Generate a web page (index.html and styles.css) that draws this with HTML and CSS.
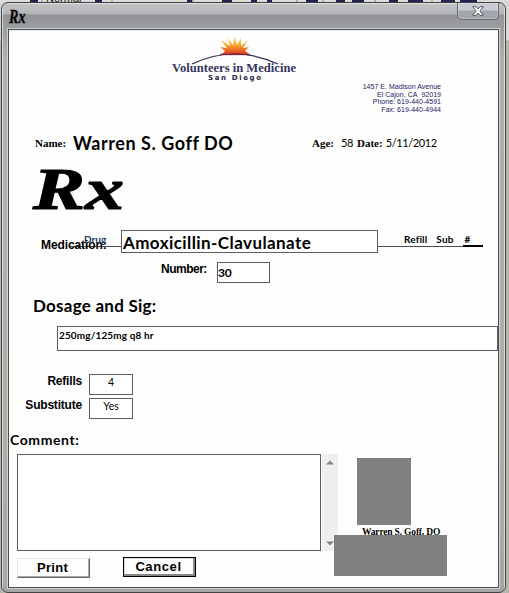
FILE: index.html
```
<!DOCTYPE html>
<html lang="en">
<head>
<meta charset="utf-8">
<title>Rx</title>
<link rel="stylesheet" href="styles.css">
</head>
<body>
<svg class="behind" width="509" height="5" viewBox="0 0 509 5" aria-hidden="true">
  <path d="M0 0H509V2H0Z" fill="#dcdcda"/>
  <path d="M30 1h8M95 1h7M187 1h5M222 1h10M251 1h6M267 1h5M306 1h12M336 1h9M352 1h12M389 1h9M408 1h15M441 1h14M460 1h17" stroke="#24244f" stroke-width="2"/>
  <path d="M42 0v2M112 0v2M193 0v2M297 0v2M323 0v2M375 0v2M432 0v2" stroke="#888"/>
  <text x="46" y="2" class="behind-text">Normal</text>
</svg>
<div class="window">
  <header class="titlebar">
    <span class="title">Rx</span>
    <button class="close" aria-label="Close"><svg width="12" height="10" viewBox="0 0 12 10"><path d="M.7.7H4L6 3 8 .7h3.3L7.8 5l3.5 4.3H8L6 7 4 9.3H.7L4.2 5Z" fill="#fff" stroke="#555a66"/></svg></button>
  </header>
  <main class="form">
    <section class="letterhead">
      <svg class="logo" width="140" height="54" viewBox="165 32 140 54">
        <defs><linearGradient id="sun" x1="0" y1="0" x2="0" y2="1"><stop offset="0" stop-color="#ffe36a"/><stop offset=".5" stop-color="#f8a72c"/><stop offset="1" stop-color="#de3b20"/></linearGradient></defs>
        <path d="M222 54 225 51 220 47 227 48 221 40 230 46 228 38 233 45 234.500 36 237 45 241 38 241 46 248 40 243 48 249 47 245 51 249 54Z" fill="url(#sun)"/>
        <path d="M192 64Q234 44 278 64" fill="none" stroke="#26264e" stroke-width="1.2"/>
        <path d="M220 54.500h30" stroke="#722742" stroke-width="1.300"/>
        <text x="172" y="72" textLength="124" lengthAdjust="spacingAndGlyphs" class="logo-name">Volunteers in Medicine</text>
        <text x="208" y="80" textLength="53" class="logo-city">San Diego</text>
      </svg>
      <address class="address">1457 E. Madison Avenue<br>El Cajon, CA&nbsp; 92019<br>Phone: 619-440-4591<br>Fax: 619-440-4944</address>
    </section>
    <section class="patient">
      <b class="serif name-label">Name:</b><b class="name">Warren S. Goff DO</b>
      <b class="serif age-label">Age:</b><span class="age">58</span><b class="serif">Date:</b><span class="date">5/11/2012</span>
    </section>
    <svg class="rx" width="100" height="50" viewBox="0 0 100 50"><text x="4" y="43.500" textLength="91" lengthAdjust="spacingAndGlyphs">Rx</text></svg>
    <section class="medication">
      <b class="label med-label">Medication:</b><span class="drug">Drug</span>
      <div class="field med-field">Amoxicillin-Clavulanate</div>
      <div class="columns"><b>Refill</b><b>Sub</b><b>#</b></div>
    </section>
    <section class="number"><b class="label">Number:</b><div class="field num-field">30</div></section>
    <h2 class="dosage">Dosage and Sig:</h2>
    <div class="field sig">250mg/125mg q8 hr</div>
    <section class="options">
      <b class="label">Refills</b><div class="field option">4</div>
      <b class="label">Substitute</b><div class="field option">Yes</div>
    </section>
    <h3 class="comment">Comment:</h3>
    <section class="bottom">
      <div class="left">
        <div class="memo"><div class="field memo-field"></div>
          <div class="scroll"><svg width="8" height="5"><path d="M0 4.500 4 .5 8 4.500Z" fill="#85858b"/></svg><svg width="8" height="5"><path d="M0 .5 4 4.500 8 .5Z" fill="#85858b"/></svg></div>
        </div>
        <div class="buttons"><button class="btn">Print</button><button class="btn cancel">Cancel</button></div>
      </div>
      <div class="signature"><div class="block-a"></div><b class="signer">Warren S. Goff, DO</b><div class="block-b"></div></div>
    </section>
  </main>
</div>
</body>
</html>
```
FILE: styles.css
```
* { box-sizing: border-box; }
body { margin: 0; width: 509px; height: 593px; overflow: hidden; background: linear-gradient(#d6d8d5 0 40px, #b4b6ae 41px 100%); font-family: Lato, Carlito, sans-serif; color: #000; }
.behind { position: absolute; left: 0; top: 0; }
.behind-text { font: 11px "Liberation Sans", sans-serif; fill: #222; }
.window { position: relative; width: 505px; height: 591px; margin: 2px 0 0 1px; padding: 0 6px 4px; border: 1px solid #414443; border-radius: 7px; background: linear-gradient(90deg, rgba(255,255,255,.6) 0 1px, transparent 1px 502px, rgba(255,255,255,.6) 502px), linear-gradient(#c4c5c7 0, #b2b4b7 11px, #929397 12px, #9c9da0 25px, #afb0ac 55px, #acaea6 430px, #a5a7a4 100%); }
.titlebar { height: 26px; display: flex; justify-content: space-between; border-top: 1px solid #ddd; }
.title { font: italic bold 19px/25px "Liberation Serif", serif; margin-left: 1px; transform: scaleX(.74); transform-origin: left; -webkit-text-stroke: .3px #000; }
.close { width: 42px; height: 17px; padding: 0; margin: -1px 0 0; border: 1px solid #666970; border-top: 0; border-radius: 0 0 5px 5px; background: linear-gradient(#c8cacf 0 7px, #a3a5ad 8px); display: flex; justify-content: center; align-items: center; box-shadow: inset 0 0 0 1px rgba(255,255,255,.25); }
.form { width: 491px; height: 559px; border: 1px solid #4c4f4e; background: #fefefe; box-shadow: 0 0 0 1px rgba(230,232,230,.65); display: flex; flex-direction: column; }
.letterhead { height: 98px; flex: none; display: flex; align-items: flex-start; border-top: 1px solid #e1f3f3; }
.logo { margin: 1px 0 0 156px; }
.logo-name { font: bold 13px "Liberation Serif", serif; fill: #34345e; }
.logo-city { font: bold 7px "DejaVu Sans", sans-serif; fill: #27273f; }
.address { width: 136px; margin-top: 52px; font: 7px/7.6px "Liberation Sans", sans-serif; text-align: right; color: #18186a; letter-spacing: .03px; white-space: nowrap; }
.patient { height: 34px; flex: none; display: flex; align-items: baseline; font-size: 11px; line-height: 30px; white-space: nowrap; padding-left: 26px; }
.serif { font: bold 11px "Liberation Serif", serif; position: relative; top: -3px; }
.name-label { width: 38px; }
.name { width: 239px; font-size: 18px; letter-spacing: .55px; }
.age-label { width: 29px; }
.age, .date { position: relative; top: -3px; letter-spacing: -.4px; }
.age { width: 16px; }
.date { margin-left: 3px; }
.rx { margin: 3px 0 0 20px; flex: none; }
.rx text { font: italic bold 59px "Liberation Serif", serif; stroke: #000; stroke-width: 1.2px; }
.medication { height: 23px; margin-top: 15px; flex: none; display: flex; background: linear-gradient(#4d4d4d, #4d4d4d) 60px 16px / 412px 1px no-repeat; }
.label { font: bold 12px/14px "Liberation Sans", sans-serif; letter-spacing: -.2px; white-space: nowrap; }
.med-label { margin: 8px 0 0 32px; width: 43px; font-size: 12px; letter-spacing: -.1px; }
.drug { width: 37px; margin-top: 3px; font-size: 10px; line-height: 13px; font-weight: bold; color: #18375c; }
.field { border: 1px solid #5d5d5f; background: #fff; white-space: nowrap; }
.med-field { width: 257px; font-size: 17px; line-height: 23px; font-weight: bold; padding-left: 1px; letter-spacing: .42px; }
.columns { display: flex; gap: 9px; margin-left: 26px; padding-top: 3px; font-size: 10px; line-height: 13px; }
.columns b { letter-spacing: .15px; }
.columns b:last-child { height: 14px; width: 20px; padding-left: 2px; border-bottom: 2px solid #000; }
.number { height: 21px; flex: none; margin: 9px 0 0 152px; display: flex; }
.number .label { width: 56px; letter-spacing: -.5px; }
.num-field { width: 53px; font-size: 12px; line-height: 20px; font-weight: bold; padding-left: 0; letter-spacing: -.2px; }
.dosage { font-size: 17px; line-height: 22px; margin: 12px 0 0 24px; letter-spacing: .25px; }
.sig { width: 441px; height: 25px; flex: none; margin: 9px 0 0 48px; padding-left: 1px; font-size: 10px; line-height: 16px; font-weight: bold; letter-spacing: .13px; }
.options { display: grid; grid-template-columns: 73px 44px; column-gap: 7px; row-gap: 3px; margin-top: 23px; }
.options .label { text-align: right; }
.option { height: 21px; text-align: center; font-size: 10.5px; line-height: 14px; }
.comment { font-size: 14px; line-height: 18px; margin: 12px 0 0 1px; letter-spacing: .6px; }
.bottom { display: flex; margin: 5px 0 0 8px; }
.left { width: 321px; flex: none; }
.memo { display: flex; gap: 1px; }
.memo-field { width: 304px; height: 97px; }
.scroll { width: 16px; height: 97px; padding: 6px 4px 5px; background: #efeff1; display: flex; flex-direction: column; justify-content: space-between; }
.buttons { display: flex; gap: 33px; margin-top: 6px; }
.btn { width: 73px; height: 20px; margin-top: 1px; padding: 0 2px 2px 0; border: 1px solid; border-color: #e4e4e4 #666 #666 #e4e4e4; box-shadow: inset -1px -1px #aaa; background: #fefefe; color: #000; font: bold 13px "Liberation Sans", sans-serif; letter-spacing: .3px; }
.cancel { margin-top: 0; padding-bottom: 1px; letter-spacing: .6px; border-color: #000; box-shadow: inset -2px -2px #888, inset 1px 1px #ddd; }
.signature { width: 113px; margin: 4px 0 0 -4px; position: relative; }
.block-a { width: 54px; height: 67px; margin-left: 23px; background: #808080; }
.signer { display: block; height: 10px; padding-left: 28px; font: bold 9.5px/14px "Liberation Serif", serif; letter-spacing: -.18px; white-space: nowrap; }
.block-b { position: relative; height: 41px; background: #808080; }
```
